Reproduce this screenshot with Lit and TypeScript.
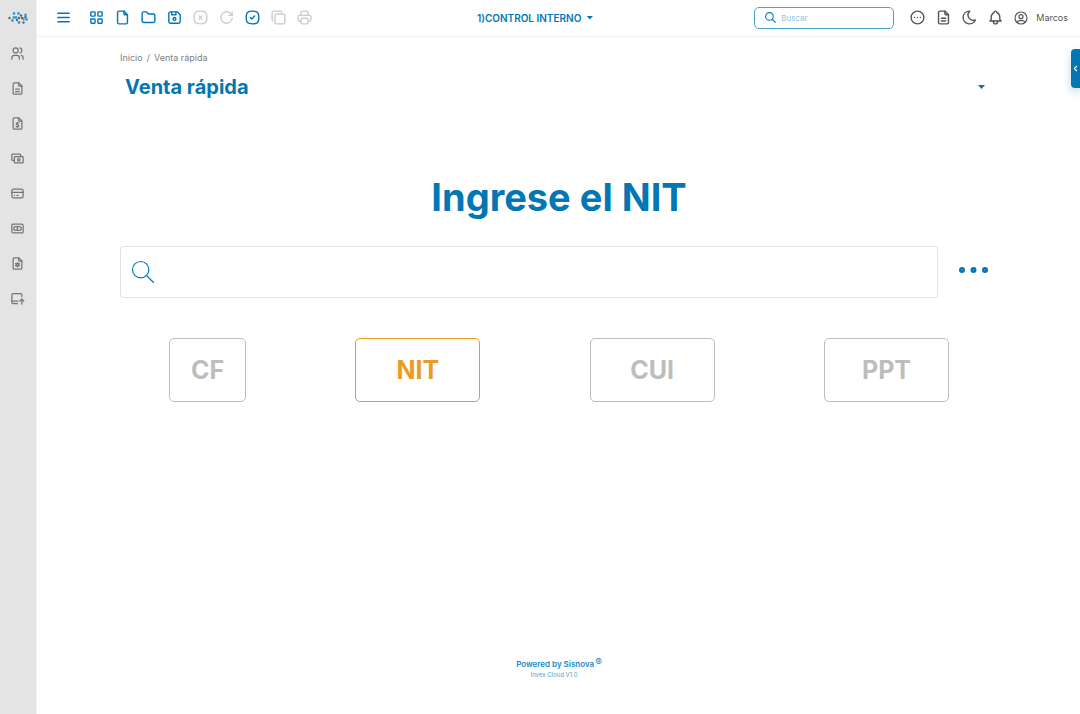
import { LitElement, html, css, svg } from "lit";
import { customElement, property, state } from "lit/decorators.js";
import { classMap } from "lit/directives/class-map.js";

const ICONS: Record<string, string[]> = {
  menu: ["M4 6h16", "M4 12h16", "M4 18h16"],
  grid: [
    "M4 5a1 1 0 0 1 1 -1h4a1 1 0 0 1 1 1v4a1 1 0 0 1 -1 1h-4a1 1 0 0 1 -1 -1z",
    "M14 5a1 1 0 0 1 1 -1h4a1 1 0 0 1 1 1v4a1 1 0 0 1 -1 1h-4a1 1 0 0 1 -1 -1z",
    "M4 15a1 1 0 0 1 1 -1h4a1 1 0 0 1 1 1v4a1 1 0 0 1 -1 1h-4a1 1 0 0 1 -1 -1z",
    "M14 15a1 1 0 0 1 1 -1h4a1 1 0 0 1 1 1v4a1 1 0 0 1 -1 1h-4a1 1 0 0 1 -1 -1z",
  ],
  file: [
    "M14 3v4a1 1 0 0 0 1 1h4",
    "M17 21h-10a2 2 0 0 1 -2 -2v-14a2 2 0 0 1 2 -2h7l5 5v11a2 2 0 0 1 -2 2z",
  ],
  folder: ["M5 4h4l3 3h7a2 2 0 0 1 2 2v8a2 2 0 0 1 -2 2h-14a2 2 0 0 1 -2 -2v-11a2 2 0 0 1 2 -2"],
  save: [
    "M6 4h10l4 4v10a2 2 0 0 1 -2 2h-12a2 2 0 0 1 -2 -2v-12a2 2 0 0 1 2 -2",
    "M10 14a2 2 0 1 0 4 0a2 2 0 1 0 -4 0",
    "M14 4v4h-6v-4",
  ],
  cancel: [
    "M10 10l4 4m0 -4l-4 4",
    "M12 3c7.2 0 9 1.8 9 9s-1.8 9 -9 9s-9 -1.8 -9 -9s1.8 -9 9 -9z",
  ],
  reload: ["M19.933 13.041a8 8 0 1 1 -9.925 -8.788c3.899 -1 7.935 1.007 9.425 4.747", "M20 4v5h-5"],
  check: ["M9 12l2 2l4 -4", "M12 3c7.2 0 9 1.8 9 9s-1.8 9 -9 9s-9 -1.8 -9 -9s1.8 -9 9 -9z"],
  copy: [
    "M7 9.667a2.667 2.667 0 0 1 2.667 -2.667h8.666a2.667 2.667 0 0 1 2.667 2.667v8.666a2.667 2.667 0 0 1 -2.667 2.667h-8.666a2.667 2.667 0 0 1 -2.667 -2.667z",
    "M4.012 16.737a2 2 0 0 1 -1.012 -1.737v-10c0 -1.1 .9 -2 2 -2h10c.75 0 1.158 .385 1.5 1",
  ],
  print: [
    "M17 17h2a2 2 0 0 0 2 -2v-4a2 2 0 0 0 -2 -2h-14a2 2 0 0 0 -2 2v4a2 2 0 0 0 2 2h2",
    "M17 9v-4a2 2 0 0 0 -2 -2h-6a2 2 0 0 0 -2 2v4",
    "M7 15a2 2 0 0 1 2 -2h6a2 2 0 0 1 2 2v4a2 2 0 0 1 -2 2h-6a2 2 0 0 1 -2 -2z",
  ],
  search: ["M3 10a7 7 0 1 0 14 0a7 7 0 1 0 -14 0", "M21 21l-6 -6"],
  dots: [
    "M3 12a9 9 0 1 0 18 0a9 9 0 1 0 -18 0",
    "M8 12v.01",
    "M12 12v.01",
    "M16 12v.01",
  ],
  invoice: [
    "M14 3v4a1 1 0 0 0 1 1h4",
    "M17 21h-10a2 2 0 0 1 -2 -2v-14a2 2 0 0 1 2 -2h7l5 5v11a2 2 0 0 1 -2 2z",
    "M9 17h6",
    "M9 13h6",
  ],
  moon: ["M12 3c.132 0 .263 0 .393 0a7.5 7.5 0 0 0 7.92 12.446a9 9 0 1 1 -8.313 -12.454z"],
  bell: [
    "M10 5a2 2 0 1 1 4 0a7 7 0 0 1 4 6v3a4 4 0 0 0 2 3h-16a4 4 0 0 0 2 -3v-3a7 7 0 0 1 4 -6",
    "M9 17v1a3 3 0 0 0 6 0v-1",
  ],
  user: [
    "M3 12a9 9 0 1 0 18 0a9 9 0 1 0 -18 0",
    "M9 10a3 3 0 1 0 6 0a3 3 0 1 0 -6 0",
    "M6.168 18.849a4 4 0 0 1 3.832 -2.849h4a4 4 0 0 1 3.834 2.855",
  ],
  users: [
    "M5 7a4 4 0 1 0 8 0a4 4 0 1 0 -8 0",
    "M3 21v-2a4 4 0 0 1 4 -4h4a4 4 0 0 1 4 4v2",
    "M16 3.13a4 4 0 0 1 0 7.75",
    "M21 21v-2a4 4 0 0 0 -3 -3.85",
  ],
  money: [
    "M14 3v4a1 1 0 0 0 1 1h4",
    "M17 21h-10a2 2 0 0 1 -2 -2v-14a2 2 0 0 1 2 -2h7l5 5v11a2 2 0 0 1 -2 2z",
    "M14 11h-2.5a1.5 1.5 0 0 0 0 3h1a1.5 1.5 0 0 1 0 3h-2.5",
    "M12 17v1m0 -8v1",
  ],
  cash: [
    "M7 15h-3a1 1 0 0 1 -1 -1v-8a1 1 0 0 1 1 -1h12a1 1 0 0 1 1 1v3",
    "M7 10a1 1 0 0 1 1 -1h12a1 1 0 0 1 1 1v8a1 1 0 0 1 -1 1h-12a1 1 0 0 1 -1 -1z",
    "M12 14a2 2 0 1 0 4 0a2 2 0 0 0 -4 0",
  ],
  card: [
    "M3 8a3 3 0 0 1 3 -3h12a3 3 0 0 1 3 3v8a3 3 0 0 1 -3 3h-12a3 3 0 0 1 -3 -3z",
    "M3 10h18",
    "M7 15h.01",
    "M11 15h2",
  ],
  brand: [
    "M3 7a2 2 0 0 1 2 -2h14a2 2 0 0 1 2 2v10a2 2 0 0 1 -2 2h-14a2 2 0 0 1 -2 -2z",
    "M12 12a3 3 0 1 0 -6 0a3 3 0 1 0 6 0",
    "M12 9h3a3 3 0 0 1 0 6h-3",
  ],
  report: [
    "M14 3v4a1 1 0 0 0 1 1h4",
    "M17 21h-10a2 2 0 0 1 -2 -2v-14a2 2 0 0 1 2 -2h7l5 5v11a2 2 0 0 1 -2 2z",
    "M10 14a2 2 0 1 0 4 0a2 2 0 1 0 -4 0",
    "M12 10.5v1.500",
    "M12 16v1.500",
    "M15.031 12.250l-1.299 .750",
    "M10.268 15l-1.300 .750",
    "M15 15.803l-1.285 -.773",
    "M10.285 12.970l-1.285 -.773",
  ],
  upload: [
    "M12 20h-7a2 2 0 0 1 -2 -2v-12a2 2 0 0 1 2 -2h12a2 2 0 0 1 2 2v3",
    "M3 16h10",
    "M19 21v-8",
    "M16 16l3 -3l3 3",
  ],
  left: ["M15 6l-6 6l6 6"],
};

@customElement("ui-icon")
class UiIcon extends LitElement {
  @property() name = "";
  @property({ type: Number }) size = 17;
  @property({ type: Number }) stroke = 2;

  static styles = css`
    :host { display: block; flex: none; }
    svg {
      display: block;
      fill: none;
      stroke: currentColor;
      stroke-linecap: round;
      stroke-linejoin: round;
    }
  `;

  render() {
    return html`<svg width=${this.size} height=${this.size} viewBox="0 0 24 24"
      stroke-width=${this.stroke} aria-hidden="true">
      ${(ICONS[this.name] ?? []).map((d) => svg`<path d=${d}></path>`)}
    </svg>`;
  }
}

const LOGO_BLUE = [[14, 5.500], [18.500, 5.500], [25.500, 7], [16, 9.500], [12.500, 12.500], [23.500, 11], [19, 14.500], [26.500, 11.500], [14, 9.500]];
const LOGO_DARK = [[9.500, 10], [21, 7.500], [19, 10], [17, 12], [25.500, 9], [23.500, 14.500], [22, 10]];

@customElement("app-root")
class AppRoot extends LitElement {
  @state() private kind = "NIT";

  static styles = css`
    :host {
      display: grid;
      grid-template-columns: 37px minmax(0, 1fr);
      min-height: 100vh;
      background: #fff;
      color: #0277b3;
      font-family: Inter, "Liberation Sans", sans-serif;
    }
    * { box-sizing: border-box; }
    button, input { font: inherit; color: inherit; }
    button { border: 0; background: none; padding: 0; cursor: pointer; }
    a { color: inherit; text-decoration: none; }

    .side {
      background: #e4e4e4;
      border-right: 1px solid #f1f1f1;
      color: #757575;
    }
    .logo { display: block; height: 36px; padding-top: 8px; }
    .logo svg { display: block; }
    .side ul {
      list-style: none;
      margin: 0;
      padding: 0;
      display: flex;
      flex-direction: column;
    }
    .side li a {
      height: 35px;
      display: flex;
      align-items: center;
      padding-left: 10px;
    }

    .page { display: flex; flex-direction: column; min-width: 0; }
    .bar {
      height: 37px;
      border-bottom: 1px solid #eeeeee;
      display: flex;
      align-items: center;
      justify-content: space-between;
      padding: 0 12px 1px 18px;
    }
    .tools { display: flex; align-items: center; gap: 9px; }
    .tools button:first-child { margin-right: 7px; }
    .tools button:disabled { color: #cccccc; cursor: default; }
    .company {
      display: flex;
      align-items: center;
      gap: 5px;
      padding-left: 3px;
      font-size: 10px;
      font-weight: 600;
      line-height: 16px;
    }
    .caret {
      display: block;
      width: 7px;
      height: 4px;
      background: currentColor;
      clip-path: polygon(0 0, 100% 0, 50% 100%);
    }
    .right { display: flex; align-items: center; gap: 9px; color: #555555; }
    .search {
      width: 140px;
      height: 22px;
      border: 1px solid #4fa3cf;
      border-radius: 5px;
      display: flex;
      align-items: center;
      gap: 4px;
      padding: 0 8px 0 9px;
      margin-right: 6px;
      color: #0277b3;
    }
    .search input {
      min-width: 0;
      width: 100%;
      border: 0;
      outline: 0;
      padding: 0;
      background: none;
      font-size: 8px;
      line-height: 12px;
    }
    .search input::placeholder { color: #93c5e0; opacity: 1; }
    .account {
      display: flex;
      align-items: center;
      gap: 7px;
      font-size: 9px;
      line-height: 12px;
    }

    main {
      flex: 1;
      display: flex;
      flex-direction: column;
      padding: 15px 82px 0 83px;
    }
    .crumbs {
      display: flex;
      gap: 4px;
      color: #808080;
      font-size: 9px;
      line-height: 12px;
    }
    .heading {
      display: flex;
      align-items: center;
      justify-content: space-between;
      padding: 9px 13px 0 5px;
    }
    h1 { margin: 0; font-size: 20px; line-height: 28px; font-weight: 700; }
    h2 {
      margin: 72px 0 0;
      text-align: center;
      font-size: 38px;
      line-height: 48px;
      font-weight: 700;
    }
    .lookup { display: flex; align-items: center; gap: 20px; margin-top: 25px; }
    .box {
      flex: 1;
      min-width: 0;
      height: 52px;
      border: 1px solid #e2e2e2;
      border-radius: 3px;
      display: flex;
      align-items: center;
      padding: 0 8px;
      gap: 8px;
    }
    .box input {
      flex: 1;
      min-width: 0;
      height: 40px;
      border: 0;
      outline: 0;
      background: none;
      font-size: 24px;
    }
    .more { width: 40px; padding-bottom: 5px; }
    .more svg { display: block; }
    .kinds {
      display: flex;
      justify-content: space-between;
      padding: 0 49px;
      margin-top: 40px;
    }
    .kind {
      width: 125px;
      height: 64px;
      border: 1px solid #bdbdbd;
      border-radius: 5px;
      color: #bdbdbd;
      font-size: 25px;
      line-height: 32px;
      font-weight: 700;
    }
    .kind.narrow { width: 77px; }
    .kind.on { border-color: #ec9b22; color: #ec9b22; }

    footer {
      margin-top: auto;
      padding-bottom: 34px;
      text-align: center;
      font-size: 6px;
      line-height: 10px;
      color: #4fa3cf;
    }
    footer p { margin: 0; padding-right: 10px; }
    footer .by {
      display: flex;
      justify-content: center;
      align-items: flex-start;
      gap: 1px;
      padding-right: 0;
      color: #2189bf;
      font-size: 8px;
      line-height: 12px;
      font-weight: 600;
    }
    footer sup { font-size: 10px; line-height: 8px; font-weight: 400; }

    .drawer {
      position: absolute;
      top: 49px;
      right: 0;
      width: 9px;
      height: 39px;
      border-radius: 4px 0 0 4px;
      background: #0277b3;
      color: #fff;
      display: flex;
      align-items: center;
      justify-content: center;
      box-shadow: 0 4px 8px rgba(2, 119, 179, 0.25);
    }
  `;

  private tool(name: string, label: string, disabled = false) {
    return html`<button aria-label=${label} ?disabled=${disabled}>
      <ui-icon name=${name}></ui-icon>
    </button>`;
  }

  render() {
    const side = [
      ["users", "Clientes"], ["invoice", "Documentos"], ["money", "Facturas"], ["cash", "Caja"],
      ["card", "Tarjetas"], ["brand", "Pagos"], ["report", "Reportes"], ["upload", "Cargas"],
    ];
    return html`
      <nav class="side" aria-label="Principal">
        <a class="logo" href="#" aria-label="Invex">
          <svg width="36" height="20" viewBox="0 0 36 20">
            ${LOGO_BLUE.map(([x, y]) => svg`<circle cx=${x} cy=${y} r="1.400" fill="#3f9fd0"></circle>`)}
            ${LOGO_DARK.map(([x, y]) => svg`<circle cx=${x} cy=${y} r="1.200" fill="#5d6474"></circle>`)}
          </svg>
        </a>
        <ul>
          ${side.map(([icon, label]) => html`<li>
            <a href="#" aria-label=${label}><ui-icon name=${icon} size="15"></ui-icon></a>
          </li>`)}
        </ul>
      </nav>
      <div class="page">
        <header class="bar">
          <div class="tools">
            ${this.tool("menu", "Menú")}
            ${this.tool("grid", "Módulos")}
            ${this.tool("file", "Nuevo")}
            ${this.tool("folder", "Abrir")}
            ${this.tool("save", "Guardar")}
            ${this.tool("cancel", "Anular", true)}
            ${this.tool("reload", "Recargar", true)}
            ${this.tool("check", "Confirmar")}
            ${this.tool("copy", "Copiar", true)}
            ${this.tool("print", "Imprimir", true)}
          </div>
          <button class="company">1)CONTROL INTERNO<span class="caret"></span></button>
          <div class="right">
            <label class="search">
              <ui-icon name="search" size="13"></ui-icon>
              <input type="search" placeholder="Buscar" aria-label="Buscar" />
            </label>
            ${this.tool("dots", "Más")}
            ${this.tool("invoice", "Documentos")}
            ${this.tool("moon", "Modo oscuro")}
            ${this.tool("bell", "Notificaciones")}
            <button class="account">
              <ui-icon name="user" size="16" stroke="1.750"></ui-icon>Marcos
            </button>
          </div>
        </header>
        <main>
          <nav class="crumbs" aria-label="Ruta">
            <a href="#">Inicio</a><span>/</span><a href="#">Venta rápida</a>
          </nav>
          <div class="heading">
            <h1>Venta rápida</h1>
            <button aria-label="Opciones"><span class="caret"></span></button>
          </div>
          <h2>Ingrese el NIT</h2>
          <div class="lookup">
            <label class="box">
              <ui-icon name="search" size="28" stroke="1"></ui-icon>
              <input type="text" aria-label="NIT" />
            </label>
            <button class="more" aria-label="Más opciones">
              <svg width="32" height="8" viewBox="0 0 32 8" fill="#2b8fc0" stroke="#0277b3" stroke-width="2">
                <circle cx="4" cy="4" r="2"></circle>
                <circle cx="15.500" cy="4" r="2"></circle>
                <circle cx="27" cy="4" r="2"></circle>
              </svg>
            </button>
          </div>
          <div class="kinds">
            ${["CF", "NIT", "CUI", "PPT"].map((k) => html`<button
              class=${classMap({ kind: true, narrow: k === "CF", on: k === this.kind })}
              aria-pressed=${k === this.kind ? "true" : "false"}
              @click=${() => (this.kind = k)}>${k}</button>`)}
          </div>
          <footer>
            <p class="by">Powered by Sisnova<sup>®</sup></p>
            <p>Invex Cloud V1.0</p>
          </footer>
        </main>
      </div>
      <button class="drawer" aria-label="Abrir panel"><ui-icon name="left" size="9" stroke="3"></ui-icon></button>
    `;
  }
}
